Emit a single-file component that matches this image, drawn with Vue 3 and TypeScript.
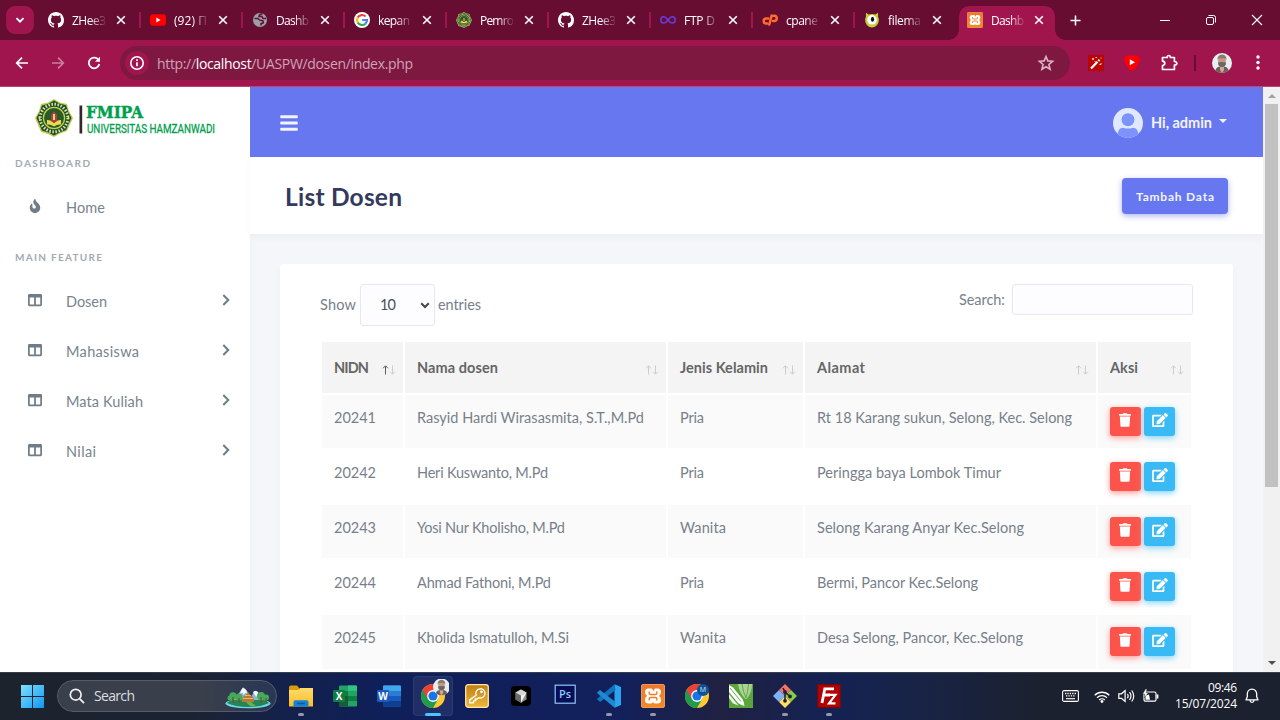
<script setup lang="ts">
interface Tab { icon: string; title: string; width: number; active?: boolean }
interface Dosen { nidn: string; nama: string; namaW: number; jk: string; jkW: number; alamat: string; alamatW: number }
interface App { icon: string; label?: string; running?: boolean; focused?: boolean }

// Spreads the letters of a label so that it takes the given width.
const vFit = {
  mounted(el: HTMLElement, binding: { value: number }) {
    const count = (el.textContent ?? '').trim().length
    const natural = el.getBoundingClientRect().width
    if (count > 1 && binding.value) {
      const spacing = (binding.value - natural) / (count - 1)
      el.style.letterSpacing = `${spacing}px`
      el.style.marginRight = `${-spacing}px`
    }
  },
}

const tabs: Tab[] = [
  { icon: 'github', title: 'ZHee3', width: 34 },
  { icon: 'youtube', title: '(92) П', width: 33 },
  { icon: 'globe', title: 'Dashb', width: 33 },
  { icon: 'google', title: 'kepan', width: 32 },
  { icon: 'emblem', title: 'Pemro', width: 34 },
  { icon: 'github', title: 'ZHee3', width: 34 },
  { icon: 'infinity', title: 'FTP D', width: 31 },
  { icon: 'cpanel', title: 'cpane', width: 32 },
  { icon: 'monster', title: 'filema', width: 33 },
  { icon: 'xampp', title: 'Dashb', width: 33, active: true },
]

const menu = [
  { label: 'Dosen', width: 41 },
  { label: 'Mahasiswa', width: 73 },
  { label: 'Mata Kuliah', width: 77 },
  { label: 'Nilai', width: 30 },
]

const columns = [
  { label: 'NIDN', width: 35, sorted: true },
  { label: 'Nama dosen', width: 81, sorted: false },
  { label: 'Jenis Kelamin', width: 88, sorted: false },
  { label: 'Alamat', width: 48, sorted: false },
  { label: 'Aksi', width: 28, sorted: false },
]

const rows: Dosen[] = [
  { nidn: '20241', nama: 'Rasyid Hardi Wirasasmita, S.T.,M.Pd', namaW: 227, jk: 'Pria', jkW: 24, alamat: 'Rt 18 Karang sukun, Selong, Kec. Selong', alamatW: 255 },
  { nidn: '20242', nama: 'Heri Kuswanto, M.Pd', namaW: 131, jk: 'Pria', jkW: 24, alamat: 'Peringga baya Lombok Timur', alamatW: 184 },
  { nidn: '20243', nama: 'Yosi Nur Kholisho, M.Pd', namaW: 148, jk: 'Wanita', jkW: 46, alamat: 'Selong Karang Anyar Kec.Selong', alamatW: 207 },
  { nidn: '20244', nama: 'Ahmad Fathoni, M.Pd', namaW: 134, jk: 'Pria', jkW: 24, alamat: 'Bermi, Pancor Kec.Selong', alamatW: 161 },
  { nidn: '20245', nama: 'Kholida Ismatulloh, M.Si', namaW: 152, jk: 'Wanita', jkW: 46, alamat: 'Desa Selong, Pancor, Kec.Selong', alamatW: 206 },
]

const apps: App[] = [
  { icon: 'explorer', running: true },
  { icon: 'excel', label: 'X' },
  { icon: 'word', label: 'W' },
  { icon: 'chrome-avatar', focused: true },
  { icon: 'key' },
  { icon: 'cube' },
  { icon: 'photoshop', label: 'Ps' },
  { icon: 'vscode', running: true },
  { icon: 'xampp', running: true },
  { icon: 'chrome-m', label: 'M' },
  { icon: 'corel' },
  { icon: 'git', running: true },
  { icon: 'filezilla', running: true },
]
</script>

<template>
  <div class="screen">
    <svg class="sprite" aria-hidden="true">
      <defs>
        <linearGradient id="gStart" x1="0" y1="0" x2="1" y2="1"><stop offset="0" stop-color="#7fe0ff" /><stop offset="1" stop-color="#0f97f0" /></linearGradient>
        <linearGradient id="gFolder" x1="0" y1="0" x2="0" y2="1"><stop offset="0" stop-color="#ffdb6b" /><stop offset="1" stop-color="#fbbd2b" /></linearGradient>
        <linearGradient id="gKey" x1="0" y1="0" x2="0" y2="1"><stop offset="0" stop-color="#c07f10" /><stop offset="1" stop-color="#efb83b" /></linearGradient>
        <linearGradient id="gXampp" x1="0" y1="0" x2="0" y2="1"><stop offset="0" stop-color="#f0762a" /><stop offset="1" stop-color="#f58a1f" /></linearGradient>
      </defs>
      <symbol id="i-github" viewBox="0 0 16 16"><path fill="#fff" d="M8 0C3.58 0 0 3.58 0 8c0 3.54 2.29 6.53 5.47 7.59.4.07.55-.17.55-.38 0-.19-.01-.82-.01-1.49-2.01.37-2.53-.49-2.69-.94-.09-.23-.48-.94-.82-1.13-.28-.15-.68-.52-.01-.53.63-.01 1.08.58 1.23.82.72 1.21 1.87.87 2.33.66.07-.52.28-.87.51-1.07-1.78-.2-3.64-.89-3.64-3.95 0-.87.31-1.59.82-2.15-.08-.2-.36-1.02.08-2.12 0 0 .67-.21 2.2.82.64-.18 1.32-.27 2-.27s1.36.09 2 .27c1.53-1.04 2.2-.82 2.2-.82.44 1.1.16 1.92.08 2.12.51.56.82 1.27.82 2.15 0 3.07-1.87 3.75-3.65 3.95.29.25.54.73.54 1.48 0 1.07-.01 1.93-.01 2.2 0 .21.15.46.55.38A8.01 8.01 0 0 0 16 8c0-4.42-3.58-8-8-8z" /></symbol>
      <symbol id="i-youtube" viewBox="0 0 16 16"><rect y="2.3" width="16" height="11.4" rx="3" fill="#f00" /><path d="M6.3 5.6v4.8L10.6 8z" fill="#fff" /></symbol>
      <symbol id="i-globe" viewBox="0 0 16 16"><circle cx="8" cy="8" r="7" fill="#9aa0a6" /><path d="M2.500 6.500H6q1 2 3.500 2t1.500 2.500l-2 .5v2M10.500 1.800Q7 2.500 7 4.500h3l1 2h3" stroke="#660d31" stroke-width="1.600" fill="none" /></symbol>
      <symbol id="i-google" viewBox="0 0 16 16"><circle cx="8" cy="8" r="8" fill="#fff" /><g fill="none" stroke-width="2.200"><path d="M11.600 4.500A5 5 0 0 0 3.700 5.500" stroke="#ea4335" /><path d="M3.700 5.500a5 5 0 0 0 0 5" stroke="#fbbc05" /><path d="M3.700 10.500a5 5 0 0 0 7.700 1.200" stroke="#34a853" /><path d="M11.400 11.700A5 5 0 0 0 13 8H8.200" stroke="#4285f4" /></g></symbol>
      <symbol id="i-emblem" viewBox="0 0 38 38">
        <path d="M19 0l6 3.500 7 1.500 2 7 4 7-3 6.500-3 6.500-7 2.500L19 38l-6-3-7-2-3-7-3-7 4-7 2-7 7-1.500z" fill="#c9c44a" />
        <path d="M19 1.500l6 3.200 6 1.500 2 6.300 3.500 6.500-3 6-2.500 6-6.500 2.500L19 36.500l-5.500-3-6.500-2-2.500-6-3-6.500 3.500-6.500 2-6 6-1.500z" fill="#14532d" />
        <circle cx="19" cy="19" r="13.800" fill="none" stroke="#dcdca8" stroke-width="3" stroke-dasharray="1.500 1.600" />
        <circle cx="19" cy="19" r="10.600" fill="#245c2c" stroke="#d6cb3e" stroke-width="1.300" />
        <path d="M12 21q3.500-.5 7 3 3.500-3.500 7-3v4.500q-3.500-.5-7 2-3.500-2.500-7-2z" fill="#e9dc52" />
        <path d="M19 12l3 4v6l-3 2-3-2v-6z" fill="#b6402c" /><path d="M18 15h2v6h-2z" fill="#e8c9a0" />
        <circle cx="4.500" cy="19" r="1" fill="#f0e86a" /><circle cx="33.500" cy="19" r="1" fill="#f0e86a" />
      </symbol>
      <symbol id="i-infinity" viewBox="0 0 16 16"><path d="M8 8C6.500 5.800 5.400 4.800 3.900 4.800a3.100 3.100 0 0 0 0 6.200C5.400 11 6.500 10.100 8 8s2.600-3.200 4.100-3.200a3.100 3.100 0 0 1 0 6.200C10.600 11 9.500 10.100 8 8z" fill="none" stroke="#673de6" stroke-width="1.500" /></symbol>
      <symbol id="i-cpanel" viewBox="0 0 16 16"><g fill="none" stroke="#ff6c2c" stroke-width="2.500" stroke-linecap="round"><path d="M6.300 6.400H4.200a2.500 2.500 0 0 0 0 5H5.300" /><path d="M7.300 12.500l2.300-8.700h2.400a2.600 2.600 0 0 1 .2 5.300H11" /></g></symbol>
      <symbol id="i-monster" viewBox="0 0 16 16"><path d="M2.200.7l2.300 1.800q3.500-1 7 0L13.800.7q.6 1.800.2 3.800 1 2 .8 4.300C14.500 12.500 11.500 15.500 8 15.500S1.500 12.500 1.200 8.800Q1 6.500 2 4.500 1.600 2.500 2.200.7z" fill="#c3cf3b" /><circle cx="8" cy="7.800" r="4.800" fill="#fff" /><ellipse cx="8.500" cy="7.200" rx="1.600" ry="2.500" fill="#111" /></symbol>
      <symbol id="i-xampp" viewBox="0 0 24 24"><rect x=".5" y=".5" width="23" height="23" rx="1.500" fill="url(#gXampp)" stroke="#ffad72" stroke-width=".8" /><path d="M7.500 4.500h2.600q1.900 0 1.900 2t1.900-2h2.600q3.500 0 3.500 3.500 0 2.900-2 4 2 1.100 2 4 0 3.500-3.500 3.500h-2.600q-1.900 0-1.900-2 0 2-1.900 2H7.500Q4 19.500 4 16q0-2.900 2-4-2-1.100-2-4 0-3.500 3.500-3.500z" fill="#fff" /><path d="M8.200 7.500v1.800q0 1.200 1.300 1.200h5q1.300 0 1.300-1.200V7.500M8.200 16.500v-1.800q0-1.200 1.300-1.200h5q1.300 0 1.300 1.200v1.800" stroke="#f07a25" stroke-width="1.400" fill="none" /></symbol>
      <symbol id="i-person" viewBox="0 0 20 20"><clipPath id="cPerson"><circle cx="10" cy="10" r="10" /></clipPath><g clip-path="url(#cPerson)"><rect width="20" height="20" fill="#e8eff0" /><path d="M3 20q0-6 5-6.500h4q5 .5 5 6.500z" fill="#6b5f5f" /><path d="M8 12h4v5l-2 3-2-3z" fill="#d8a58c" /><path d="M6.200 5h7.600v5q-.5 4-3.800 4t-3.800-4z" fill="#c99680" /><path d="M6 9.500l4-.6 4 .6q0 4.300-4 4.500-4-.2-4-4.500z" fill="#6a6668" /><path d="M5.600 7Q5 2 10 1.500 15 2 14.400 7l-1.200-1.700H6.800z" fill="#887a6d" /></g></symbol>
      <symbol id="i-bars" viewBox="0 0 448 512"><path fill="currentColor" d="M16 132h416c8.837 0 16-7.163 16-16V76c0-8.837-7.163-16-16-16H16C7.163 60 0 67.163 0 76v40c0 8.837 7.163 16 16 16zm0 160h416c8.837 0 16-7.163 16-16v-40c0-8.837-7.163-16-16-16H16c-8.837 0-16 7.163-16 16v40c0 8.837 7.163 16 16 16zm0 160h416c8.837 0 16-7.163 16-16v-40c0-8.837-7.163-16-16-16H16c-8.837 0-16 7.163-16 16v40c0 8.837 7.163 16 16 16z" /></symbol>
      <symbol id="i-trash" viewBox="0 0 448 512"><path fill="currentColor" d="M432 32H312l-9.400-18.700A24 24 0 0 0 281.100 0H166.800a23.720 23.720 0 0 0-21.400 13.300L136 32H16A16 16 0 0 0 0 48v32a16 16 0 0 0 16 16h416a16 16 0 0 0 16-16V48a16 16 0 0 0-16-16zM53.200 467a48 48 0 0 0 47.900 45h245.800a48 48 0 0 0 47.900-45L416 128H32z" /></symbol>
      <symbol id="i-edit" viewBox="0 0 576 512"><path fill="currentColor" d="M402.600 83.200l90.200 90.200c3.800 3.800 3.800 10 0 13.800L274.400 405.600l-92.800 10.300c-12.400 1.400-22.900-9.100-21.500-21.500l10.300-92.800L388.800 83.200c3.800-3.800 10-3.800 13.800 0zm162-22.900l-48.800-48.800c-15.200-15.200-39.900-15.200-55.200 0l-35.400 35.400c-3.800 3.800-3.800 10 0 13.800l90.200 90.200c3.800 3.800 10 3.800 13.800 0l35.400-35.400c15.200-15.300 15.200-40 0-55.200zM384 346.200V448H64V128h229.800c3.200 0 6.200-1.300 8.500-3.500l40-40c7.600-7.600 2.200-20.500-8.500-20.500H48C21.500 64 0 85.500 0 112v352c0 26.500 21.500 48 48 48h352c26.500 0 48-21.500 48-48V306.200c0-10.700-12.900-16-20.500-8.500l-40 40c-2.200 2.300-3.500 5.300-3.500 8.500z" /></symbol>
      <symbol id="i-columns" viewBox="0 0 512 512"><path fill="currentColor" d="M464 32H48C21.490 32 0 53.490 0 80v352c0 26.510 21.490 48 48 48h416c26.510 0 48-21.490 48-48V80c0-26.510-21.490-48-48-48zM224 416H64V160h160v256zm224 0H288V160h160v256z" /></symbol>
      <symbol id="i-fire" viewBox="0 0 384 512"><path fill="currentColor" d="M216 23.860c0-23.800-30.650-32.770-44.150-13.040C48 191.850 224 200 224 288c0 35.630-29.110 64.460-64.850 63.990-35.170-.45-63.150-29.770-63.150-64.940v-85.510c0-21.700-26.470-32.230-41.430-16.500C27.800 213.160 0 261.330 0 320c0 105.870 86.130 192 192 192s192-86.130 192-192c0-170.290-168-193-168-296.140z" /></symbol>
      <symbol id="i-chrome" viewBox="0 0 24 24"><circle cx="12" cy="12" r="12" fill="#fcc934" /><path d="M12 12L1.600 6A12 12 0 0 0 12 24l5.200-9z" fill="#1e9b4b" /><path d="M12 6h10.400A12 12 0 0 0 1.600 6l5.200 9z" fill="#ea4335" /><circle cx="12" cy="12" r="5.900" fill="#fff" /><circle cx="12" cy="12" r="4.600" fill="#1a73e8" /></symbol>
      <symbol id="i-chrome-avatar" viewBox="0 0 32 32"><use href="#i-chrome" x="4" y="5" width="24" height="24" /><use href="#i-person" x="16" y="-.5" width="17" height="17" /></symbol>
      <symbol id="i-chrome-m" viewBox="0 0 24 24"><use href="#i-chrome" width="24" height="24" /><circle cx="18" cy="6" r="6" fill="#0b5394" /></symbol>
      <symbol id="i-explorer" viewBox="0 0 24 24"><path d="M0 3.500Q0 1.500 2 1.500h6l2.500 3H22q2 0 2 2V9H0z" fill="#d99a0b" /><path d="M0 6h9l2.500-2H24v18.500H0z" fill="url(#gFolder)" /><path d="M4.500 22.500V18q0-1.800 1.800-1.800h11.400q1.800 0 1.800 1.800v4.500z" fill="#1583d8" /><path d="M8 19.500h8" stroke="#0d5ba3" stroke-width="1.600" /></symbol>
      <symbol id="i-excel" viewBox="0 0 24 24"><rect x="6" y="1.500" width="18" height="21" rx="1.300" fill="#21a366" /><path d="M15 1.500h7.700q1.300 0 1.300 1.300v4H15z" fill="#33c481" /><path d="M6 12h9v10.500H7q-1 0-1-1z" fill="#185c37" /><path d="M15 12h9v5h-9zM6 7h9v5H6z" fill="#107c41" /><rect y="6" width="12" height="12" rx="1" fill="#107c41" /></symbol>
      <symbol id="i-word" viewBox="0 0 24 24"><rect x="6" y="1.500" width="18" height="21" rx="1.300" fill="#2b7cd3" /><path d="M6 7V2.800q0-1.300 1.300-1.300h15.400q1.300 0 1.300 1.300V7z" fill="#41a5ee" /><path d="M6 12h18v5H6z" fill="#185abd" /><path d="M6 17h18v4.200q0 1.300-1.300 1.300H7.300Q6 22.500 6 21.200z" fill="#103f91" /><rect y="6" width="12" height="12" rx="1" fill="#185abd" /></symbol>
      <symbol id="i-key" viewBox="0 0 24 24"><rect x=".7" y=".7" width="22.600" height="22.600" rx="2.500" fill="url(#gKey)" stroke="#ffe6a8" stroke-width="1.300" /><path d="M11.200 11.200a4.600 4.600 0 1 1 2.400 2.400l-1.400 1.400h-1.900v1.900H8.500v2H4.700v-3z" fill="none" stroke="#fff" stroke-width="1.300" stroke-linejoin="round" /><circle cx="16.500" cy="7.800" r="1.400" fill="#fff" /></symbol>
      <symbol id="i-cube" viewBox="0 0 24 24"><rect x="2" y="2" width="20" height="20" rx="4" fill="#000" /><path d="M12 5.500l5.500 3v7L12 18.700 6.500 15.500v-7z" fill="#8f8f8f" /><path d="M6.500 8.500L12 11.500v7.200l-5.500-3.200z" fill="#6a6a6a" /><path d="M12 5.500l5.500 3-5.500 3-5.500-3z" fill="#d5d5d5" /><path d="M17.500 8.500L12 18.700v-7.200z" fill="#f4f4f4" /></symbol>
      <symbol id="i-photoshop" viewBox="0 0 24 24"><rect x="2.200" y="1.200" width="20" height="18" fill="#080d55" stroke="#8fc7f5" stroke-width="1.200" /></symbol>
      <symbol id="i-vscode" viewBox="0 0 24 24"><path d="M17.500.2v23.600L24 20.900V3z" fill="#2ba3ef" /><path d="M17.500.2l1 5.800L3.200 18 .5 15.800 0 15z" fill="#1173be" /><path d="M17.500 23.800l1-5.800L3 5.900.5 8.200 0 9z" fill="#1e8ad6" /></symbol>
      <symbol id="i-corel" viewBox="0 0 24 24"><rect width="24" height="24" fill="#5ba53c" /><path d="M9 0q1 9 7.500 15h1Q23 9 23 0z" fill="#a9d393" /><path d="M13 0q1 8 4 14M19.500 0q-.5 8-2.500 14" stroke="#66a84a" fill="none" /><path d="M0 1l4 2.500 9.500 11.500q1.500 3 2 7-4-1-6.500-3L0 8z" fill="#fff" /><path d="M0 10l9.500 11.500L4 19.500 0 14z" fill="#e9f4e3" /><path d="M1 4l11 13.500" stroke="#5ba53c" stroke-width=".9" /></symbol>
      <symbol id="i-git" viewBox="0 0 24 24"><path d="M12 0l6 6-6 6-6-6z" fill="#f57366" /><path d="M6 6l6 6-6 6-6-6z" fill="#7fb1f7" /><path d="M18 6l6 6-6 6-6-6z" fill="#86d03f" /><path d="M12 12l6 6-6 6-6-6z" fill="#ffe064" /><path d="M10 4l2 4v9M12 8l5 4.500" stroke="#23243c" stroke-width="1.600" fill="none" /><circle cx="12" cy="8" r="1.900" fill="#23243c" /><circle cx="12" cy="16.800" r="1.900" fill="#23243c" /><circle cx="17" cy="12.500" r="1.900" fill="#23243c" /></symbol>
      <symbol id="i-filezilla" viewBox="0 0 24 24"><rect x=".7" y=".7" width="22.600" height="22.600" fill="#b30000" stroke="#8a0000" stroke-width="1.200" stroke-dasharray="1.500 1" /><path d="M5 19L7.800 4.800H17M6.600 11H13" fill="none" stroke="#fff" stroke-width="2.800" /><path d="M11.500 10.800h7l-6.500 8.500h6.500" fill="none" stroke="#fff" stroke-width="2.200" /></symbol>
    </svg>

    <header class="tabstrip">
      <div class="tab-search"><svg width="12" height="12" viewBox="0 0 12 12"><path d="M2.500 4.200L6 7.700l3.500-3.500" fill="none" stroke="#fff" stroke-width="1.900" /></svg></div>
      <div class="tabs">
        <div v-for="(tab, i) in tabs" :key="i" class="tab" :class="{ active: tab.active, plain: i >= 8 }">
          <svg class="favicon"><use :href="`#i-${tab.icon}`" /></svg>
          <span class="tab-title"><span v-fit="tab.width">{{ tab.title }}</span></span>
          <svg class="tab-close" viewBox="0 0 10 10"><path d="M1.200 1.200l7.600 7.600M8.800 1.200L1.200 8.800" stroke="#fff" stroke-width="1.600" /></svg>
        </div>
      </div>
      <svg class="new-tab" viewBox="0 0 12 12"><path d="M6 .5v11M.5 6h11" stroke="#fff" stroke-width="1.700" /></svg>
      <div class="window-controls">
        <svg viewBox="0 0 12 12"><path d="M1 6.500h10" stroke="#fff" /></svg>
        <svg viewBox="0 0 12 12"><rect x="1.500" y="3.500" width="7" height="7" rx="1.500" fill="none" stroke="#fff" /><path d="M3.500 1.500H8.500a2 2 0 0 1 2 2v5" fill="none" stroke="#fff" /></svg>
        <svg viewBox="0 0 12 12"><path d="M1 1l10 10M11 1L1 11" stroke="#fff" stroke-width="1.100" /></svg>
      </div>
    </header>

    <div class="toolbar">
      <svg class="nav-icon" viewBox="0 0 16 16"><path d="M14 8H3M8 2.700L2.700 8 8 13.300" fill="none" stroke="#fff" stroke-width="1.700" /></svg>
      <svg class="nav-icon dim" viewBox="0 0 16 16"><path d="M2 8h11M8 2.700L13.300 8 8 13.300" fill="none" stroke="#fff" stroke-width="1.700" /></svg>
      <svg class="nav-icon" viewBox="0 0 16 16"><path d="M12.800 5.500A5.300 5.300 0 1 0 13.300 9" fill="none" stroke="#fff" stroke-width="1.800" /><path d="M14 1.800v5H9z" fill="#fff" /></svg>
      <div class="omnibox">
        <div class="site-info"><svg width="16" height="16" viewBox="0 0 16 16"><circle cx="8" cy="8" r="6.200" fill="none" stroke="#fff" stroke-width="1.600" /><path d="M8 7.200v4M8 4.300v1.600" stroke="#fff" stroke-width="1.700" /></svg></div>
        <span v-fit="256" class="url">http://<b>localhost</b>/UASPW/dosen/index.php</span>
        <svg class="star" viewBox="0 0 18 18"><path d="M9 2.500l1.800 4.400 4.800.4-3.700 3.200 1.200 4.700L9 12.700l-4.100 2.500 1.200-4.700-3.700-3.200 4.800-.4z" fill="none" stroke="#d9b3c3" stroke-width="1.600" /></svg>
      </div>
      <div class="extensions">
        <svg class="ext" viewBox="0 0 16 16"><rect width="16" height="16" fill="#b90504" /><path d="M3 13.500L9.500 6.800" stroke="#fff" stroke-width="2.200" /><path d="M10.300 6l1.200-1.200" stroke="#fff" stroke-width="2.200" /><path d="M4 4h2M5 3v2M7.500 2.500h1.500M13 8v1.500M11.500 9.500H13M13 2.500v1M6.500 6.500h1" stroke="#fbd9d9" stroke-width="1" fill="none" /></svg>
        <svg class="ext" viewBox="0 0 16 16"><path d="M2 .8q6-1.300 12 0Q16 2 15.800 5 14 12.500 8 16 2 12.500.2 5 0 2 2 .8z" fill="#f00" /><path d="M5.800 4.300v6L11 7.300z" fill="#fff" /></svg>
        <svg class="ext puzzle" viewBox="0 0 18 18"><path d="M2.500 3.500H7.200q0-2 1.600-2t1.600 2h4v4q2.400 0 2.400 1.800t-2.400 1.800v4.400H2.500v-4q2.300-.3 2.300-2.200T2.500 7.200z" fill="none" stroke="#fff" stroke-width="1.700" stroke-linejoin="round" /></svg>
        <i class="separator"></i>
        <svg class="avatar"><use href="#i-person" /></svg>
        <svg class="kebab" viewBox="0 0 4 16"><circle cx="2" cy="2" r="1.700" fill="#fff" /><circle cx="2" cy="7.500" r="1.700" fill="#fff" /><circle cx="2" cy="13" r="1.700" fill="#fff" /></svg>
      </div>
    </div>

    <div class="page">
      <aside class="sidebar">
        <div class="brand">
          <svg width="200" height="44" viewBox="0 0 200 44">
            <use href="#i-emblem" x="0" y="1" width="38" height="38" />
            <rect x="44.500" y="7.500" width="2.700" height="28" fill="#33272a" />
            <text x="51" y="20.300" textLength="57" lengthAdjust="spacingAndGlyphs" class="brand-top">FMIPA</text>
            <text x="52" y="34.500" textLength="128" lengthAdjust="spacingAndGlyphs" class="brand-bottom">UNIVERSITAS HAMZANWADI</text>
          </svg>
        </div>
        <div class="menu-header"><span v-fit="75">DASHBOARD</span></div>
        <a class="menu-item"><svg class="fire"><use href="#i-fire" /></svg><span v-fit="39">Home</span></a>
        <div class="menu-header second"><span v-fit="87">MAIN FEATURE</span></div>
        <a v-for="item in menu" :key="item.label" class="menu-item">
          <svg><use href="#i-columns" /></svg><span v-fit="item.width">{{ item.label }}</span>
          <svg class="chevron" viewBox="0 0 8 12"><path d="M1.300 1l5 5-5 5" fill="none" stroke="#6f7d87" stroke-width="2" /></svg>
        </a>
      </aside>

      <main class="main">
        <nav class="navbar">
          <svg class="burger"><use href="#i-bars" /></svg>
          <div class="user">
            <svg width="30" height="30" viewBox="0 0 30 30"><clipPath id="cUser"><circle cx="15" cy="15" r="15" /></clipPath><g clip-path="url(#cUser)"><rect width="30" height="30" fill="#e0e8ff" /><circle cx="15" cy="11.700" r="6.500" fill="#7c93fb" /><path d="M4.500 26Q5.500 19.700 10 19.700q5 1.800 10 0 4.500 0 5.500 6.300L22 30H8z" fill="#7c93fb" /></g></svg>
            <div class="user-name"><span v-fit="61">Hi, admin</span></div>
            <i class="caret"></i>
          </div>
        </nav>
        <section class="section-header">
          <h1><span v-fit="117">List Dosen</span></h1>
          <button class="add"><span v-fit="78">Tambah Data</span></button>
        </section>
        <section class="card">
          <div class="controls">
            <div class="length">
              <div class="label"><span v-fit="36">Show</span></div>
              <div class="select"><div class="label"><span v-fit="16">10</span></div><svg width="10" height="7" viewBox="0 0 10 7"><path d="M1.200 1.300L5 5l3.800-3.700" fill="none" stroke="#40464f" stroke-width="2" /></svg></div>
              <div class="label"><span v-fit="43">entries</span></div>
            </div>
            <div class="search"><div class="label"><span v-fit="46">Search:</span></div><input type="text" /></div>
          </div>
          <div class="table">
            <div v-for="col in columns" :key="col.label" class="th">
              <div class="label"><span v-fit="col.width">{{ col.label }}</span></div>
              <svg class="sort" viewBox="0 0 14 10"><path d="M3.500 9.500V1M1 3.300L3.500 .8 6 3.300" fill="none" :stroke="col.sorted ? '#5d5d5d' : '#cccccc'" /><path d="M10.500 .5V9M8 6.700l2.500 2.500L13 6.700" fill="none" stroke="#cccccc" /></svg>
            </div>
            <template v-for="(row, i) in rows" :key="row.nidn">
              <div class="td" :class="{ odd: i % 2 === 0 }"><span v-fit="42">{{ row.nidn }}</span></div>
              <div class="td" :class="{ odd: i % 2 === 0 }"><span v-fit="row.namaW">{{ row.nama }}</span></div>
              <div class="td" :class="{ odd: i % 2 === 0 }"><span v-fit="row.jkW">{{ row.jk }}</span></div>
              <div class="td" :class="{ odd: i % 2 === 0 }"><span v-fit="row.alamatW">{{ row.alamat }}</span></div>
              <div class="td actions" :class="{ odd: i % 2 === 0 }">
                <button class="danger"><svg><use href="#i-trash" /></svg></button>
                <button class="info"><svg><use href="#i-edit" /></svg></button>
              </div>
            </template>
          </div>
        </section>
      </main>

      <div class="scrollbar">
        <i class="arrow up"></i>
        <i class="thumb"></i>
        <i class="arrow down"></i>
      </div>
    </div>

    <footer class="taskbar">
      <svg class="start" viewBox="0 0 23 23"><path d="M0 0h11v11H0zM12 0h11v11H12zM0 12h11v11H0zM12 12h11v11H12z" fill="url(#gStart)" /></svg>
      <div class="task-search">
        <svg width="16" height="16" viewBox="0 0 16 16"><circle cx="6.700" cy="6.700" r="5.400" fill="none" stroke="#f0f0f2" stroke-width="1.700" /><path d="M10.800 10.800l4.200 4.400" stroke="#f0f0f2" stroke-width="1.800" /></svg>
        <span v-fit="41">Search</span>
        <svg class="scene" viewBox="0 0 46 22"><ellipse cx="23" cy="16.500" rx="22.500" ry="4.800" fill="#6fd8ea" /><path d="M2 16Q6 12 14 12h20q8 1 10 4-8 4-21 4T2 16z" fill="#238653" /><path d="M8 13l6-7 4-5.500 3 2 5 7.500 3-5.500 3-.5 7 9z" fill="#8eb2dc" /><path d="M16 3.500l2-3 3 2.500 1.500 4-2-1.200-2 2-1.200-2.400-2.300 1.600zM28 5l2-1.300 2.500 1 3.500 5-3-1.500-2 1.500z" fill="#f5f8ff" /><path d="M17 15v-3l2-3h1l3-4 3 4h1l2 3v3z" fill="#b37b36" /><path d="M18 11.500h10M20 8.500h6" stroke="#e8b85f" /><g fill="#43ab58"><circle cx="8" cy="9" r="3.700" /><circle cx="14" cy="10" r="3.500" /><circle cx="36" cy="9" r="4" /><circle cx="41" cy="10.500" r="3" /><circle cx="5" cy="11" r="2.500" /></g><path d="M8 10v6M14 11v5M36 10v6M41 11v4" stroke="#7b4c2c" stroke-width="1.200" /><path d="M21 15h5l5 4h-6z" fill="#71ad54" /></svg>
      </div>
      <div class="apps">
        <div v-for="(app, i) in apps" :key="i" class="app" :class="[`app-${app.icon}`, { focused: app.focused, running: app.running }]">
          <svg><use :href="`#i-${app.icon}`" /></svg>
          <span v-if="app.label" class="app-label">{{ app.label }}</span>
        </div>
      </div>
      <div class="tray">
        <svg width="17" height="12" viewBox="0 0 17 12"><rect x=".6" y=".6" width="15.800" height="10.800" rx="1.500" fill="none" stroke="#fff" stroke-width="1.100" /><path d="M3 3.500h11M4 5.800h9.500" stroke="#fff" stroke-width="1.300" stroke-dasharray="1.300 1.100" /><path d="M4 8.700h9" stroke="#fff" stroke-width="1.100" /></svg>
        <svg class="wifi" width="16" height="13" viewBox="0 0 16 13"><g fill="none" stroke="#fff" stroke-width="1.300"><path d="M.7 5.300a10.300 10.300 0 0 1 14.600 0" /><path d="M3 7.700a7 7 0 0 1 10 0" /><path d="M5.200 10a4 4 0 0 1 5.600 0" /></g><circle cx="8" cy="11.500" r="1.400" fill="#fff" /></svg>
        <svg width="17" height="14" viewBox="0 0 17 14"><g fill="none" stroke="#fff" stroke-width="1.200"><path d="M.8 4.800h2.700l3.600-3.300v11L3.500 9.300H.8z" /><path d="M9.400 5a3.500 3.500 0 0 1 0 4.200M11.500 3.200a6.300 6.300 0 0 1 0 7.700M13.700 1.500a9.200 9.200 0 0 1 0 11" /></g></svg>
        <svg class="battery" width="17" height="14" viewBox="0 0 17 14"><rect x="2" y="3" width="12" height="9.200" rx="1.500" fill="none" stroke="#fff" stroke-width="1.200" /><path d="M15.500 5.500v4" stroke="#fff" stroke-width="1.800" /><path d="M3.500 10.700V6.500L7 5.500l1 5.200z" fill="#fff" /><path d="M3.500 0L.8 5h2L2.300 9l4-5.200H4.200L5 0z" fill="#fff" stroke="#1b212e" stroke-width=".4" /></svg>
        <div class="clock"><div><span v-fit="29">09:46</span></div><div><span v-fit="62">15/07/2024</span></div></div>
        <svg class="bell" width="14" height="16" viewBox="0 0 14 16"><path d="M7 1.200c-3 0-4.700 2.200-4.700 5v2.600L1 11.900h12l-1.300-3.100V6.200c0-2.800-1.700-5-4.700-5zM5 12.500q.3 1.800 2 1.800t2-1.800" fill="none" stroke="#fff" stroke-width="1.300" stroke-linejoin="round" /></svg>
      </div>
    </footer>
  </div>
</template>

<style>
html, body { margin: 0; overflow: hidden; }
</style>

<style scoped>
* { box-sizing: border-box; }
svg { display: block; flex: none; }
button { border: 0; padding: 0; font: inherit; color: inherit; }
.screen { width: 1280px; height: 720px; display: flex; flex-direction: column; overflow: hidden; font-family: 'Open Sans', 'Noto Sans', sans-serif; }
.sprite { position: absolute; width: 0; height: 0; }

.tabstrip { height: 40px; flex: none; background: #660d31; display: flex; padding-left: 6px; }
.tab-search { width: 28px; height: 28px; margin-top: 6px; border-radius: 9px; background: #a0154e; display: grid; place-items: center; }
.tabs { display: flex; margin-left: 5px; }
.tab { position: relative; width: 102px; height: 34px; margin-top: 6px; padding: 0 14px 0 9px; display: flex; align-items: center; }
.tab::after { content: ''; position: absolute; right: 0; top: 6px; width: 2px; height: 16px; background: #a0154e; }
.tab.plain::after { display: none; }
.favicon { width: 16px; height: 16px; margin-top: -6px; }
.tab-title { width: 33px; flex: none; margin: -5px 0 0 8px; overflow: hidden; white-space: nowrap; font-size: 12px; line-height: 18px; color: #fff; -webkit-mask-image: linear-gradient(90deg, #000 55%, rgba(0, 0, 0, .12)); mask-image: linear-gradient(90deg, #000 55%, rgba(0, 0, 0, .12)); }
.tab-title span { display: inline-block; }
.tab-close { width: 10px; height: 10px; margin: -6px 0 0 11px; }
.tab.active { width: 96px; margin-left: 2px; padding-left: 8px; background: #a0154e; border-radius: 10px 10px 0 0; }
.tab.active .tab-close { margin-left: 10px; }
.tab.active::before { content: ''; position: absolute; left: -10px; right: -10px; bottom: 0; height: 10px; background: radial-gradient(circle at 0 0, transparent 9.500px, #a0154e 10px) left / 10px 10px no-repeat, radial-gradient(circle at 100% 0, transparent 9.500px, #a0154e 10px) right / 10px 10px no-repeat; }
.new-tab { width: 11px; height: 11px; margin: 15px 0 0 15px; }
.window-controls { display: flex; margin: 14px 17px 0 auto; gap: 34px; }
.window-controls svg { width: 12px; height: 12px; }

.toolbar { height: 47px; flex: none; background: #a0154e; border-bottom: 1px solid #b9487a; display: flex; align-items: center; padding-left: 14px; }
.nav-icon { width: 16px; height: 16px; margin-right: 20px; }
.nav-icon.dim { opacity: .45; }
.omnibox { width: 950px; height: 34px; margin-left: -2px; background: #7e1841; border-radius: 17px; display: flex; align-items: center; padding: 0 15px 0 5px; }
.site-info { width: 24px; height: 24px; border-radius: 50%; background: #a0154e; display: grid; place-items: center; }
.url { margin-left: 8px; display: inline-block; font-size: 14px; color: #cfa3b5; white-space: nowrap; }
.url b { font-weight: 400; color: #fff; }
.star { width: 18px; height: 18px; margin-left: auto; }
.extensions { flex: 1; display: flex; align-items: center; padding: 0 20px 0 18px; }
.ext { width: 16px; height: 16px; margin-right: 20px; }
.puzzle { width: 18px; height: 18px; margin-right: 16px; }
.separator { width: 2px; height: 16px; background: #660d31; }
.avatar { width: 20px; height: 20px; margin-left: 16px; }
.kebab { width: 4px; height: 16px; margin-left: auto; }

.page { height: 585px; flex: none; display: flex; overflow: hidden; background: #f4f6f9; font-family: Lato, 'Open Sans', sans-serif; }
.page span { display: inline-block; white-space: nowrap; }
.sidebar { width: 250px; flex: none; background: #fff; box-shadow: 0 4px 8px rgba(0, 0, 0, .03); }
.brand { padding: 11px 0 0 35px; height: 60px; }
.brand-top { font: 900 17.500px 'DejaVu Serif', serif; fill: #009f4d; stroke: #009f4d; stroke-width: .5px; }
.brand-bottom { font: 400 13.400px Roboto, sans-serif; fill: #009f4d; stroke: #009f4d; stroke-width: .3px; }
.menu-header { height: 34px; padding-left: 15px; line-height: 33px; font-size: 10px; font-weight: 700; color: #a4aab1; }
.menu-header.second { margin-top: 10px; }
.menu-item { height: 50px; display: flex; align-items: center; padding: 2px 0 0 28px; font-size: 14.500px; line-height: 20px; color: #78838d; }
.menu-item span { margin-top: 1px; }
.menu-item svg { width: 14px; height: 14px; margin: -2px 24px 0 0; color: #6f7d87; }
.menu-item .fire { margin-top: -3px; }
.menu-item .chevron { width: 8px; height: 12px; margin: -3px 20px 0 auto; }

.main { width: 1013px; display: flex; flex-direction: column; }
.navbar { height: 70px; flex: none; background: #6777ef; display: flex; align-items: center; padding: 2px 36px 0 30px; color: #f2f3ff; }
.burger { width: 18px; height: 20px; margin-top: -1px; }
.user { display: flex; align-items: center; margin-left: auto; font-size: 14.500px; font-weight: 700; }
.user-name { width: 61px; margin: -2px 0 0 8px; }
.caret { margin: -5px 0 0 7px; border: 4px solid transparent; border-top-color: currentColor; border-bottom: 0; }
.section-header { height: 77px; flex: none; background: #fff; box-shadow: 0 4px 8px rgba(0, 0, 0, .03); display: flex; align-items: center; justify-content: space-between; padding: 1px 35px 0; }
h1 { margin: 1px 0 0; font-size: 24.500px; font-weight: 700; line-height: 30px; color: #34395e; }
.add { width: 106px; height: 36px; border-radius: 4px; background: #6777ef; color: #f2f3ff; box-shadow: 0 2px 6px #acb5f6; font-size: 12px; font-weight: 700; }
.card { width: 953px; height: 440px; flex: none; margin: 30px 0 0 30px; background: #fff; border-radius: 3px; box-shadow: 0 4px 8px rgba(0, 0, 0, .03); padding: 20px 40px 0; font-size: 14.500px; color: #77808a; }
.label { padding-bottom: 1px; }
.controls { display: flex; justify-content: space-between; height: 58px; }
.length { height: 42px; display: flex; align-items: center; }
.length > .label:first-child { width: 36px; }
.select { width: 75px; height: 42px; margin: 0 3px 0 4px; border: 1px solid #e4e6fc; border-radius: 3px; background: #fdfdff; color: #495057; display: flex; align-items: center; padding: 0 4px 0 19px; justify-content: space-between; }
.search { display: flex; align-items: center; height: 31px; gap: 7px; }
.search .label { width: 46px; }
.search input { width: 181px; height: 31px; border: 1px solid #e4e6fc; border-radius: 3px; background: #fdfdff; }
.table { margin-left: 2px; display: grid; grid-template-columns: 81px 261px 135px 291px 93px; gap: 2px; grid-template-rows: 51px repeat(4, 53px) 54px; }
.th { background: #f4f4f4; display: flex; align-items: center; justify-content: space-between; padding: 0 7px 0 12px; font-weight: 700; color: #666; }
.sort { width: 14px; height: 10px; margin-top: 4px; }
.td { padding: 13.500px 0 0 12px; line-height: 18px; }
.td.odd { background: #fafafa; }
.td.actions { padding-top: 12px; display: flex; gap: 3px; }
.actions button { width: 31px; height: 29px; border-radius: 3px; color: #fff; display: flex; justify-content: center; padding-top: 6px; }
.actions .danger { background: #fc544b; box-shadow: 0 2px 6px #fd9b96; }
.actions .info { background: #3abaf4; box-shadow: 0 2px 6px #82d3f8; }
.danger svg { width: 12px; height: 14px; margin-right: 1px; }
.info svg { width: 16px; height: 14px; }

.scrollbar { width: 17px; background: #f1f1f1; display: flex; flex-direction: column; align-items: center; }
.thumb { width: 13px; height: 383px; background: #c1c1c1; margin-top: 6px; }
.arrow { border: 4px solid transparent; }
.up { margin-top: 7px; border-top: 0; border-bottom-color: #a3a3a3; }
.down { margin: auto 0 7px; border-bottom: 0; border-top-color: #505050; }

.taskbar { height: 48px; flex: none; border-top: 1px solid #39404d; display: flex; align-items: center; padding-left: 21px; color: #fff; background: linear-gradient(90deg, #1c232d 0, #1b2331 190px, #14214a 280px, #0f1f59 380px, #12205b 620px, #202142 720px, #142253 830px, #182344 930px, #1b212e 1040px); }
.taskbar span { display: inline-block; white-space: nowrap; }
.start { width: 23px; height: 23px; }
.task-search { width: 220px; height: 32px; margin: -1px 0 0 13px; border: 1px solid #555c69; border-radius: 16px; background: linear-gradient(90deg, #3a404b 65%, #293656); display: flex; align-items: center; padding: 0 5px 0 11px; font-size: 14px; color: #dcdde0; }
.task-search span { margin: -1px 0 0 9px; }
.scene { width: 46px; height: 22px; margin: 4px 0 0 auto; }
.apps { display: flex; gap: 4px; margin: -1px 0 0 4px; }
.app { position: relative; width: 40px; height: 40px; display: grid; place-items: center; border-radius: 4px; }
.app svg { width: 24px; height: 24px; }
.app-label { position: absolute; left: 8px; top: 14px; width: 12px; font-size: 10px; font-weight: 700; line-height: 12px; text-align: center; }
.app-photoshop .app-label { left: 10px; top: 12px; width: 20px; font-size: 11px; font-weight: 600; color: #8fc9ff; }
.app-chrome-m .app-label { left: 20px; top: 8px; font-size: 7px; font-weight: 400; color: #cfe8ff; }
.app.focused { background: #202d66; box-shadow: inset 0 0 0 1px #2d3a70; }
.app.focused svg { width: 32px; height: 32px; margin-top: -2px; }
.app.running::after, .app.focused::after { content: ''; position: absolute; bottom: 0; left: 17px; width: 6px; height: 3px; border-radius: 2px; background: #9498a9; }
.app.focused::after { left: 12px; width: 16px; background: #4cc2ff; }
.tray { display: flex; align-items: center; margin: 0 21px 1px auto; }
.wifi { margin: 0 8px 0 15px; }
.battery { margin-left: 7px; }
.clock { width: 69px; margin-left: 9px; text-align: right; font-size: 12px; line-height: 16px; }
.bell { margin-left: 8px; }
</style>
